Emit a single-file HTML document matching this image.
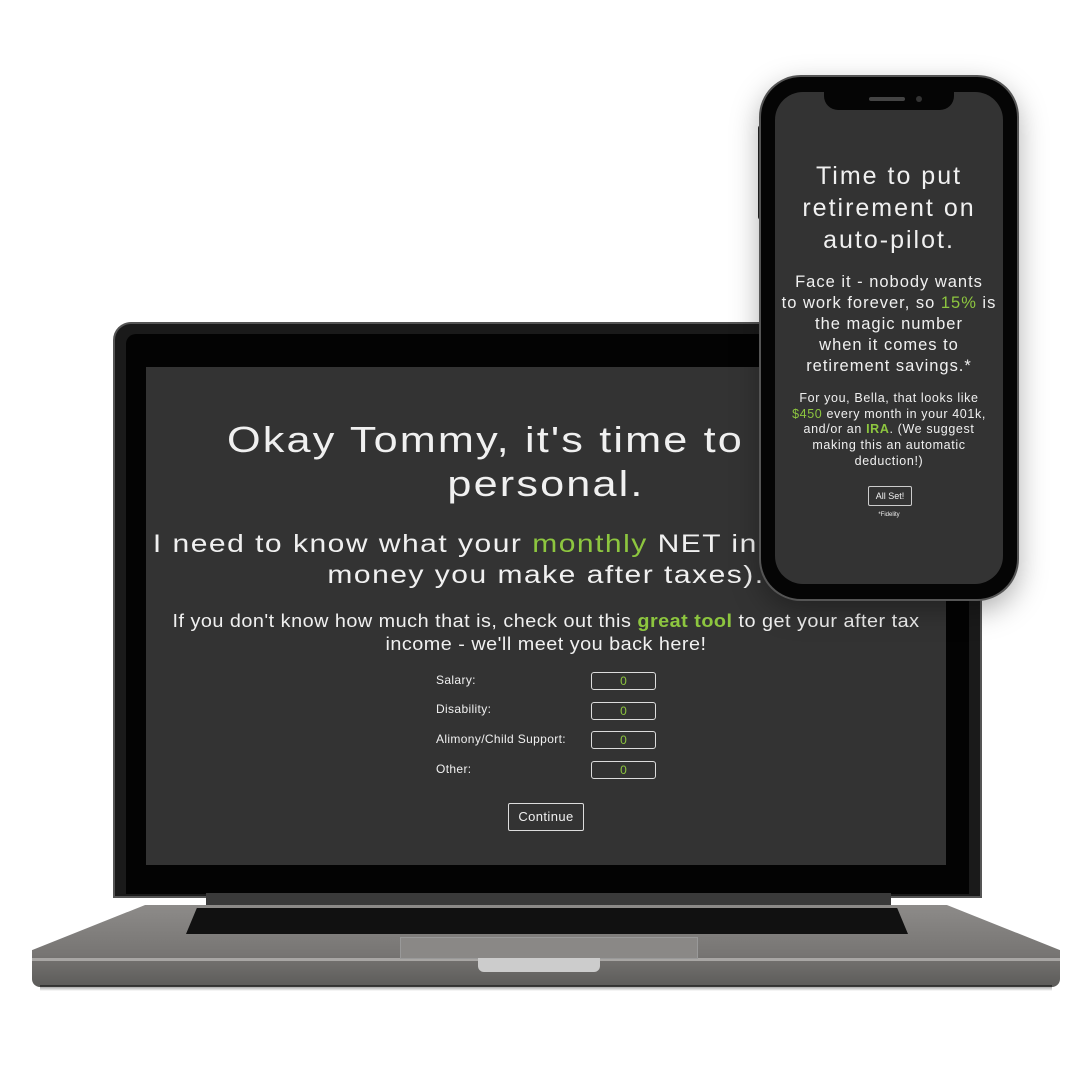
<!DOCTYPE html>
<html><head><style>
body{margin:0;width:1080px;height:1080px;background:#fff;position:relative;overflow:hidden;font-family:"Liberation Sans",sans-serif;color:#f0f0f0}
.a{position:absolute}
.g{color:#8dc63f}
.c{text-align:center;white-space:nowrap}
.inp{position:absolute;left:591px;width:63px;height:16px;border:1px solid #ddd;border-radius:3px;color:#8dc63f;font-size:12px;text-align:center;line-height:16px}
.lab{position:absolute;left:436px;font-size:12px;letter-spacing:.03em}
</style></head><body>
<!-- laptop lid -->
<div class="a" style="left:115px;top:324px;width:865px;height:572px;background:#1a1a1a;border-radius:16px 16px 0 0;box-shadow:0 0 0 2px #555"></div>
<div class="a" style="left:126px;top:334px;width:843px;height:560px;background:#030303;border-radius:10px 10px 0 0"></div>
<div class="a" style="left:146px;top:367px;width:800px;height:498px;background:#333;overflow:hidden">
<div class="a c" style="left:0;top:51px;width:800px;font-size:36px;line-height:44px;letter-spacing:.05em;transform:scaleX(1.2)">Okay Tommy, it's time to get a<br>personal.</div>
<div class="a c" style="left:-100px;top:162px;width:1000px;font-size:25px;line-height:31px;letter-spacing:.05em;transform:scaleX(1.2)">I need to know what your <span class="g">monthly</span> NET income is (the<br>money you make after taxes).</div>
<div class="a c" style="left:0;top:243px;width:800px;font-size:18px;line-height:23px;letter-spacing:.025em;transform:scaleX(1.1)">If you don't know how much that is, check out this <b class="g">great tool</b> to get your after tax<br>income - we'll meet you back here!</div>
</div>
<!-- hinge -->
<div class="a" style="left:206px;top:893px;width:685px;height:14px;background:#3a3a3a"></div>
<!-- base -->
<div class="a" style="left:32px;top:905px;width:1028px;height:82px;background:linear-gradient(#8d8b89,#777573 60%,#5c5b59);clip-path:polygon(11% 0,89% 0,100% 55%,100% 100%,0 100%,0 55%);border-radius:0 0 8px 8px"></div>
<div class="a" style="left:40px;top:985px;width:1012px;height:6px;background:linear-gradient(rgba(0,0,0,.5),rgba(0,0,0,0))"></div>
<div class="a" style="left:32px;top:958px;width:1028px;height:3px;background:#a8a6a4"></div>
<div class="a" style="left:186px;top:908px;width:722px;height:26px;background:#111;clip-path:polygon(1.5% 0,98.5% 0,100% 100%,0 100%)"></div>
<div class="a" style="left:400px;top:937px;width:296px;height:20px;background:#8a8886;border:1px solid #999"></div>
<div class="a" style="left:478px;top:958px;width:122px;height:14px;background:#ccc;border-radius:0 0 6px 6px"></div>
<div class="lab" style="top:673px">Salary:</div><div class="inp" style="top:672px">0</div>
<div class="lab" style="top:702px">Disability:</div><div class="inp" style="top:702px">0</div>
<div class="lab" style="top:732px">Alimony/Child Support:</div><div class="inp" style="top:731px">0</div>
<div class="lab" style="top:762px">Other:</div><div class="inp" style="top:761px">0</div>
<div class="a c" style="left:508px;top:803px;width:74px;height:26px;border:1px solid #ddd;border-radius:2px;font-size:13px;line-height:26px;letter-spacing:.03em">Continue</div>
<!-- phone -->
<div class="a" style="left:758px;top:125px;width:6px;height:95px;background:#222;border-radius:3px"></div>
<div class="a" style="left:1013px;top:195px;width:6px;height:60px;background:#222;border-radius:3px"></div>
<div class="a" style="left:761px;top:77px;width:256px;height:522px;background:#050505;border-radius:40px;box-shadow:0 0 0 2px #555,0 10px 30px rgba(0,0,0,.35)"></div>
<div class="a" style="left:775px;top:92px;width:228px;height:492px;background:#333;border-radius:28px"></div>
<div class="a" style="left:824px;top:90px;width:130px;height:20px;background:#050505;border-radius:0 0 14px 14px"></div>
<div class="a" style="left:869px;top:97px;width:36px;height:4px;background:#444;border-radius:2px"></div>
<div class="a" style="left:916px;top:96px;width:6px;height:6px;background:#333;border-radius:50%"></div>
<div class="a c" style="left:775px;top:160px;width:228px;font-size:25px;line-height:32px;letter-spacing:.08em">Time to put<br>retirement on<br>auto-pilot.</div>
<div class="a c" style="left:775px;top:272px;width:228px;font-size:16.5px;line-height:21px;letter-spacing:.06em">Face it - nobody wants<br>to work forever, so <span class="g">15%</span> is<br>the magic number<br>when it comes to<br>retirement savings.*</div>
<div class="a c" style="left:775px;top:391px;width:228px;font-size:12.5px;line-height:15.7px;letter-spacing:.05em">For you, Bella, that looks like<br><span class="g">$450</span> every month in your 401k,<br>and/or an <b class="g">IRA</b>. (We suggest<br>making this an automatic<br>deduction!)</div>
<div class="a c" style="left:868px;top:486px;width:42px;height:18px;border:1px solid #ccc;border-radius:2px;font-size:9px;line-height:18px">All Set!</div>
<div class="a c" style="left:775px;top:512px;width:228px;font-size:6px">*Fidelity</div>
</body></html>
